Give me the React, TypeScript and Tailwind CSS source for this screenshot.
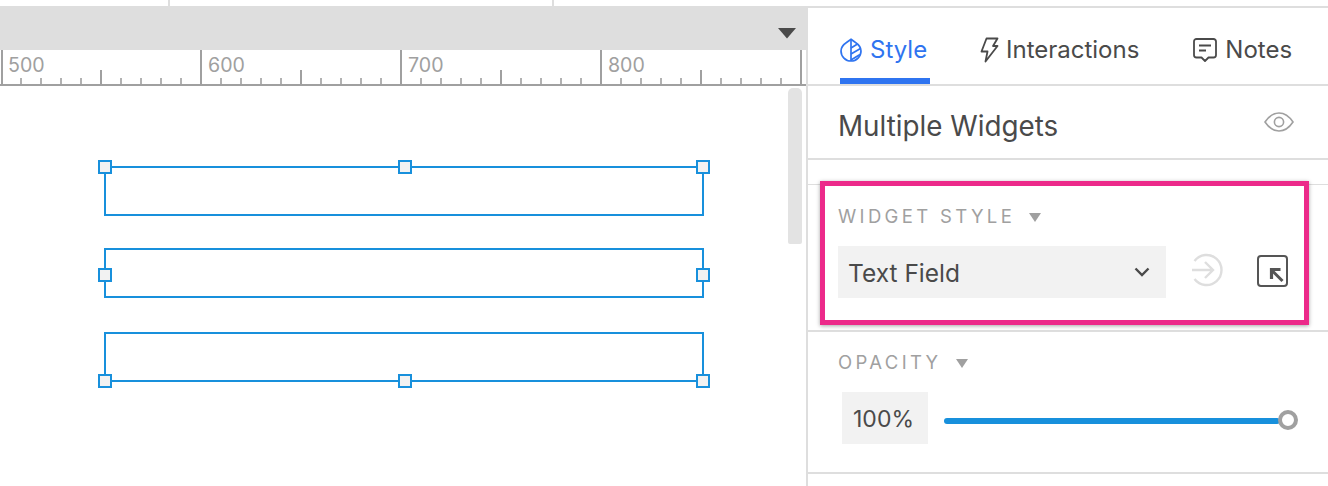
import React from "react";

const font = { fontFamily: "Inter, 'Liberation Sans', sans-serif" };

function Ruler() {
  const ticks: React.ReactNode[] = [];
  for (let x = 20; x < 806; x += 20) {
    if (x % 200 === 0) continue;
    const mid = x % 100 === 0;
    ticks.push(
      <rect key={x} x={mid ? x : x + 0.2} y={mid ? 20 : 28} width={mid ? 2 : 1.6} height={mid ? 14 : 6} fill="#a0a0a0" />
    );
  }
  const majors = [1, 200, 400, 600, 800];
  const labels = ["500", "600", "700", "800"];
  return (
    <svg width="806" height="36" viewBox="0 0 806 36" className="block">
      <rect x="0" y="34" width="806" height="2" fill="#a0a0a0" />
      {majors.map((x) => (
        <rect key={x} x={x} y="0" width={2} height="34" fill="#a0a0a0" />
      ))}
      {ticks}
      {labels.map((l, i) => (
        <text key={l} x={8 + i * 200} y="21.5" fontSize="19.6" fill="#a0a0a0" fontFamily="Inter, sans-serif">
          {l}
        </text>
      ))}
    </svg>
  );
}

function Handle({ className }: { className: string }) {
  return <div className={"absolute w-[14px] h-[14px] bg-[#f2f2f2] border-2 border-[#1890dc] " + className} />;
}

function LeafIcon() {
  return (
    <svg width="22" height="24" viewBox="0 0 22 24" fill="none" stroke="#2f74f0" strokeWidth="1.7" className="shrink-0">
      <path d="M11 1.2 L15.5 4.5 C19 6.8 21 9.5 21 13 A10 10 0 0 1 1 13 C1 9.5 3 6.8 6.5 4.5 Z" />
      <path d="M11 1.2 V23" />
      <path d="M11 10 L17.5 6 M11 16 L20.5 10.5 M11 22 L20 16.5" />
    </svg>
  );
}

function BoltIcon() {
  return (
    <svg width="19" height="26" viewBox="0 0 19 26" fill="none" stroke="#4a4a4a" strokeWidth="1.8" strokeLinejoin="round" className="shrink-0">
      <path d="M6.5 1.5 H17.5 L13 9 H17.5 L5.5 24.5 L7.5 14.5 H1.5 Z" />
    </svg>
  );
}

function NoteIcon() {
  return (
    <svg width="24" height="24" viewBox="0 0 24 24" fill="none" stroke="#4a4a4a" strokeWidth="1.8" strokeLinejoin="round" className="shrink-0">
      <path d="M3.5 1 H20.5 A2.5 2.5 0 0 1 23 3.5 V17 A2.5 2.5 0 0 1 20.5 19.5 H15.5 L12 23 L8.5 19.5 H3.5 A2.5 2.5 0 0 1 1 17 V3.5 A2.5 2.5 0 0 1 3.5 1 Z" />
      <path d="M6 7.5 H18 M6 12.5 H13" />
    </svg>
  );
}

function EyeIcon() {
  return (
    <svg width="30" height="20" viewBox="0 0 30 20" fill="none" stroke="#a0a0a0" strokeWidth="1.6">
      <path d="M1 10 C5 4 10 1 15 1 C20 1 25 4 29 10 C25 16 20 19 15 19 C10 19 5 16 1 10 Z" />
      <circle cx="15" cy="10" r="4.6" />
    </svg>
  );
}

function Caret() {
  return (
    <svg width="12" height="9" viewBox="0 0 12 9" className="shrink-0">
      <path d="M0 0 H12 L6 9 Z" fill="#a0a0a0" />
    </svg>
  );
}

export default function App() {
  return (
    <div className="relative flex w-[1328px] h-[486px] overflow-hidden bg-white" style={font}>
      <div className="w-[808px] shrink-0 flex flex-col">
        <div className="h-[6px] relative flex">
          <div className="w-[168px]" />
          <div className="w-[2px] bg-[#dedede]" />
          <div className="w-[382px]" />
          <div className="w-[2px] bg-[#dedede]" />
        </div>
        <div className="h-[44px] bg-[#dedede] flex items-start justify-end pr-[12px] pt-[22px]">
          <svg width="18" height="11" viewBox="0 0 18 11">
            <path d="M0 0 H18 L9 10.5 Z" fill="#4a4a4a" />
          </svg>
        </div>
        <div className="flex-1 border-r-2 border-[#dedede] relative">
          <Ruler />
          <div className="absolute left-[788px] top-[38px] w-[14px] h-[156px] bg-[#e3e3e3] rounded-t-[5px] rounded-b-[2px]" />

          <div className="absolute left-[104px] top-[116px] w-[600px] h-[50px] border-2 border-[#1890dc]">
            <Handle className="-left-[8px] -top-[8px]" />
            <Handle className="left-[292px] -top-[8px]" />
            <Handle className="-right-[8px] -top-[8px]" />
          </div>
          <div className="absolute left-[104px] top-[198px] w-[600px] h-[50px] border-2 border-[#1890dc]">
            <Handle className="-left-[8px] top-[18px]" />
            <Handle className="-right-[8px] top-[18px]" />
          </div>
          <div className="absolute left-[104px] top-[282px] w-[600px] h-[50px] border-2 border-[#1890dc]">
            <Handle className="-left-[8px] -bottom-[8px]" />
            <Handle className="left-[292px] -bottom-[8px]" />
            <Handle className="-right-[8px] -bottom-[8px]" />
          </div>
        </div>
      </div>

      <div className="flex-1 flex flex-col">
        <div className="h-[8px] border-b-2 border-[#dedede]" />

        <div className="h-[78px] border-b-2 border-[#dedede] flex text-[24px] text-[#4a4a4a]">
          <div className="ml-[32px] w-[90px] h-[76px] border-b-[6px] border-[#2f74f0] flex items-center gap-[8px] pt-[13px] text-[#2f74f0]">
            <LeafIcon />
            <span>Style</span>
          </div>
          <div className="ml-[50px] h-[76px] flex items-center gap-[7px] pt-[10px] pb-[2px]">
            <BoltIcon />
            <span>Interactions</span>
          </div>
          <div className="ml-[54px] h-[76px] flex items-center gap-[8px] pt-[10px] pb-[2px]">
            <NoteIcon />
            <span>Notes</span>
          </div>
        </div>

        <div className="h-[74px] border-b-2 border-[#dedede] flex items-center justify-between pl-[30px] pr-[34px] pt-[10px]">
          <span className="text-[27.8px] text-[#4a4a4a]">Multiple Widgets</span>
          <span className="mb-[10px]"><EyeIcon /></span>
        </div>

        <div className="h-[25px] border-b border-[#dedede]" />

        <div className="h-[147px] border-b-2 border-[#dedede] pl-[30px] pt-[21px]">
          <div className="flex items-center gap-[14px] h-[22px] text-[18.5px] tracking-[3.35px] text-[#a0a0a0]">
            <span>WIDGET STYLE</span>
            <Caret />
          </div>
          <div className="mt-[18px] flex items-center">
            <div className="w-[328px] h-[52px] bg-[#f2f2f2] flex items-center justify-between pl-[10px] pr-[16px]">
              <span className="text-[24.5px] text-[#4a4a4a] pt-[3px]">Text Field</span>
              <svg width="16" height="10" viewBox="0 0 16 10" fill="none" stroke="#4a4a4a" strokeWidth="2.4">
                <path d="M1.5 1.5 L8 8 L14.5 1.5" />
              </svg>
            </div>
            <svg width="32" height="34" viewBox="0 0 32 34" fill="none" stroke="#dedede" strokeWidth="2.4" className="ml-[25px] mb-[4px]">
              <path d="M3.5 8 A15 15 0 1 1 3.5 26" />
              <path d="M1 17 H22 M14 9 L22 17 L14 25" />
            </svg>
            <svg width="31" height="32" viewBox="0 0 31 32" fill="none" stroke="#555555" className="ml-[34px] mb-[2px]">
              <rect x="1" y="1" width="29" height="30" rx="3" strokeWidth="2" />
              <path d="M15 15.5 L25.5 26" strokeWidth="3" />
              <path d="M14.5 24 V14.5 H23.5" strokeWidth="3.2" />
            </svg>
          </div>
        </div>

        <div className="h-[142px] border-b-2 border-[#dedede] pl-[30px] pt-[20px]">
          <div className="flex items-center gap-[14px] h-[22px] text-[18.5px] tracking-[3.35px] text-[#a0a0a0]">
            <span>OPACITY</span>
            <Caret />
          </div>
          <div className="mt-[18px] ml-[4px] flex items-center">
            <div className="w-[86px] h-[52px] bg-[#f2f2f2] flex items-center justify-center text-[23px] text-[#4a4a4a] pt-[2px] pr-[3px]">100%</div>
            <div className="ml-[16px] mt-[6px] w-[354px] flex items-center relative h-[24px]">
              <div className="w-[342px] h-[6px] rounded-full bg-[#1890dc]" />
              <div className="w-[20px] h-[20px] -ml-[2px] -mt-[3px] rounded-full border-[4px] border-[#a0a0a0] bg-white shrink-0" />
            </div>
          </div>
        </div>
      </div>

      <div className="absolute left-[820px] top-[181px] w-[489px] h-[144px] border-[5px] border-[#ec2a8a] shadow-[0_1px_4px_rgba(0,0,0,0.35)]" />
    </div>
  );
}
